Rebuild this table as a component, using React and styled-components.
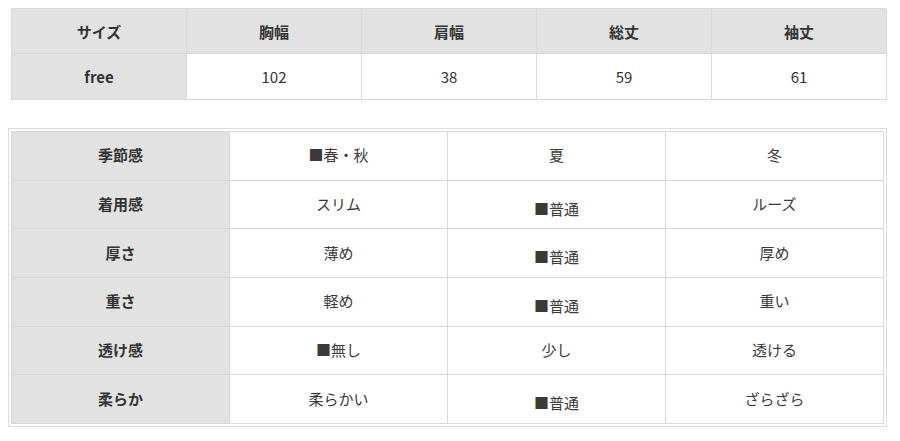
import React from "react";
import styled, { createGlobalStyle } from "styled-components";

const GlobalStyle = createGlobalStyle`
  body {
    margin: 0;
    background: #ffffff;
    font-family: "Noto Sans CJK JP", "Noto Sans", sans-serif;
    color: #333333;
  }
`;

const sizeHead = ["サイズ", "胸幅", "肩幅", "総丈", "袖丈"];
const sizeRow = ["free", "102", "38", "59", "61"];

const feelRows = [
  { label: "季節感", values: ["■春・秋", "夏", "冬"] },
  { label: "着用感", values: ["スリム", "■普通", "ルーズ"] },
  { label: "厚さ", values: ["薄め", "■普通", "厚め"] },
  { label: "重さ", values: ["軽め", "■普通", "重い"] },
  { label: "透け感", values: ["■無し", "少し", "透ける"] },
  { label: "柔らか", values: ["柔らかい", "■普通", "ざらざら"] },
];

export default function App() {
  return (
    <Page>
      <GlobalStyle />
      <SizeTable>
        <tbody>
          <SizeRow height={45}>
            {sizeHead.map((h) => (
              <SizeCell key={h} head>
                {h}
              </SizeCell>
            ))}
          </SizeRow>
          <SizeRow height={46}>
            {sizeRow.map((v, i) => (
              <SizeCell key={i} head={i === 0}>
                {v}
              </SizeCell>
            ))}
          </SizeRow>
        </tbody>
      </SizeTable>

      <FeelFrame>
        <FeelTable>
          <tbody>
            {feelRows.map((row) => (
              <FeelRow key={row.label}>
                <FeelLabel>{row.label}</FeelLabel>
                {row.values.map((v) => (
                  <FeelCell key={v} low={v === "■普通"}>
                    {v}
                  </FeelCell>
                ))}
              </FeelRow>
            ))}
          </tbody>
        </FeelTable>
      </FeelFrame>
    </Page>
  );
}

const Page = styled.div`
  display: flex;
  flex-direction: column;
  align-items: flex-start;
  padding: 8px 0 0 8px;
`;

const SizeTable = styled.table`
  margin-left: 3px;
  width: 876px;
  border-collapse: collapse;
  table-layout: fixed;
`;

const SizeRow = styled.tr`
  height: ${({ height }) => height}px;
`;

const SizeCell = styled.td`
  border: 1px solid #d9d9d9;
  background: ${({ head }) => (head ? "#e2e2e2" : "#ffffff")};
  font-weight: ${({ head }) => (head ? 700 : 400)};
  font-size: 15px;
  text-align: center;
  vertical-align: middle;
  padding: 0;
  color: #333333;
`;

const FeelFrame = styled.div`
  margin-top: 28px;
  width: 873px;
  border: 1px solid #dcdcdc;
  padding: 2px;
`;

const FeelTable = styled.table`
  width: 100%;
  border-collapse: collapse;
  table-layout: fixed;
`;

const FeelRow = styled.tr`
  height: 48.7px;
`;

const FeelLabel = styled.td`
  border: 1px solid #d9d9d9;
  background: #e2e2e2;
  font-weight: 700;
  font-size: 15px;
  text-align: center;
  vertical-align: middle;
  padding: 0 0 2px;
  color: #333333;
`;

const FeelCell = styled.td`
  border: 1px solid #d9d9d9;
  background: #ffffff;
  font-size: 15px;
  text-align: center;
  vertical-align: middle;
  padding: ${({ low }) => (low ? "7px 0 0" : "0 0 2px")};
  color: #3a3a3a;
`;
